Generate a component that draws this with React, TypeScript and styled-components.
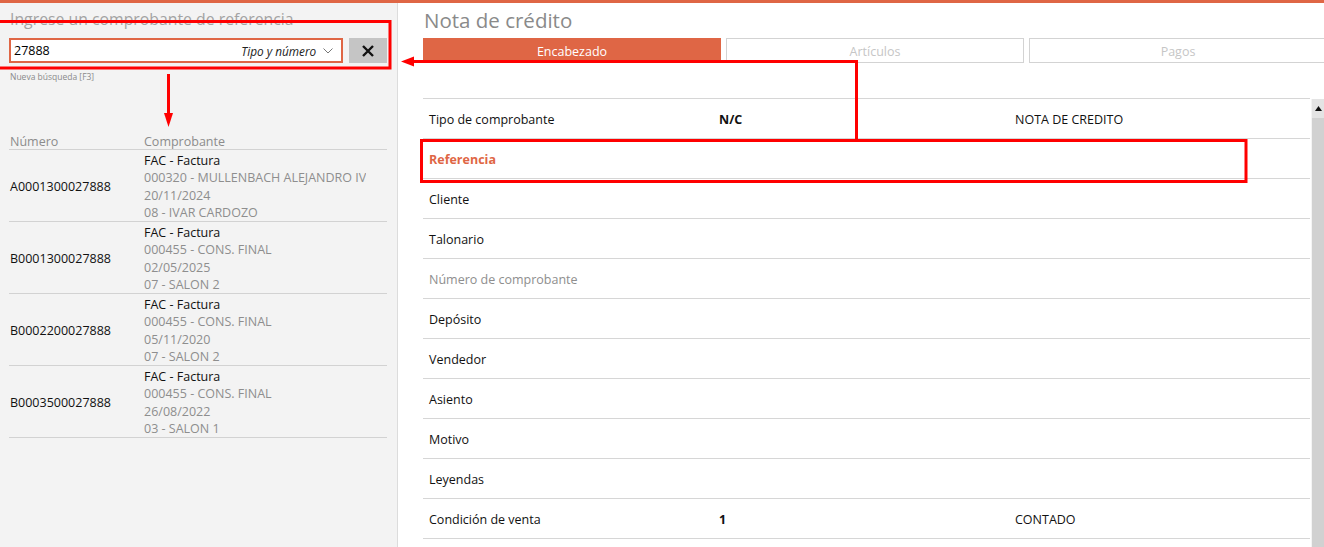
import styled, { createGlobalStyle } from "styled-components";

const GlobalStyle = createGlobalStyle`
    html, body {
        margin: 0;
        padding: 0;
        background: #ffffff;
    }
    body {
        font-family: "Open Sans", "Noto Sans", sans-serif;
        font-size: 12.5px;
        color: #111;
    }
    * { box-sizing: border-box; }
`

const ORANGE = "#df6645";

const Page = styled.div`
    position: relative;
    width: 1324px;
    height: 547px;
    overflow: hidden;
    border-top: 3px solid ${ORANGE};
    display: flex;
`

/* left side: reference search */
const LeftPanel = styled.div`
    width: 398px;
    flex-shrink: 0;
    background: #f3f3f3;
    border-right: 1px solid #dcdcdc;
    padding: 5px 10px 0 9px;
    display: flex;
    flex-direction: column;
`
const LeftTitle = styled.div`
    font-size: 15.8px;
    line-height: 22px;
    color: #a3a3a3;
    padding-left: 1px;
    white-space: nowrap;
`
const SearchRow = styled.div`
    display: flex;
    gap: 6px;
    margin-top: 8px;
    height: 25px;
`
const SearchBox = styled.div`
    width: 336px;
    height: 25px;
    background: #fff;
    border: 2px solid ${ORANGE};
    display: flex;
    align-items: center;
    padding: 0 8px 0 3px;
`
const SearchValue = styled.span`
    flex: 1;
    font-size: 12.5px;
    color: #000;
`
const SearchType = styled.span`
    font-style: italic;
    font-size: 11.8px;
    color: #222;
    margin-right: 7px;
`
const ClearButton = styled.button`
    width: 38px;
    height: 25px;
    border: none;
    padding: 0;
    background: #c5c5c5;
    display: flex;
    align-items: center;
    justify-content: center;
`
const Hint = styled.div`
    font-size: 8.5px;
    line-height: 10px;
    color: #8a8a8a;
    margin-top: 9px;
    padding-left: 1px;
`
const Table = styled.div`
    width: 378px;
    margin-top: 50px;
`
const HeadRow = styled.div`
    display: flex;
    height: 18px;
    border-bottom: 1px solid #d2d2d2;
    color: #8c8c8c;
    line-height: 16px;
    padding-top: 2px;
`
const NumCol = styled.div`
    width: 135px;
    flex-shrink: 0;
    padding-left: 1px;
`
const CompCol = styled.div`
    width: 222px;
    overflow: hidden;
    white-space: nowrap;
`
const ResultRow = styled.div`
    display: flex;
    align-items: center;
    height: 72px;
    padding-top: 2px;
    border-bottom: 1px solid #d2d2d2;
`
const RowNumber = styled(NumCol)`
    color: #111;
`
const Line = styled.div<{ $muted?: boolean }>`
    line-height: 17.2px;
    color: ${p => (p.$muted ? "#8e8e8e" : "#111")};
`

/* right side: credit note form */
const RightPanel = styled.div`
    flex: 1;
    padding: 4px 0 0 25px;
    display: flex;
    flex-direction: column;
    overflow: hidden;
`
const Title = styled.div`
    font-size: 20.5px;
    line-height: 26px;
    color: #8a8a8a;
    padding-left: 1px;
`
const Tabs = styled.div`
    display: grid;
    grid-template-columns: repeat(3, 298px);
    gap: 5px;
    margin-top: 5px;
`
const Tab = styled.div<{ $active?: boolean }>`
    height: 25px;
    line-height: 25px;
    text-align: center;
    font-size: 12.5px;
    border: 1px solid ${p => (p.$active ? ORANGE : "#d3d3d3")};
    background: ${p => (p.$active ? ORANGE : "#fff")};
    color: ${p => (p.$active ? "#fff" : "#c6c6c6")};
`
const FormArea = styled.div`
    display: flex;
    gap: 1px;
    margin-top: 35px;
    flex: 1;
`
const Form = styled.div`
    width: 887px;
    border-top: 1px solid #d6d6d6;
`
const FormRow = styled.div`
    display: grid;
    grid-template-columns: 296px 296px 1fr;
    align-items: center;
    height: 40px;
    padding-top: 2px;
    border-bottom: 1px solid #d6d6d6;
`
const Label = styled.div<{ $tone?: "accent" | "muted" }>`
    padding-left: 6px;
    color: ${p => (p.$tone === "accent" ? ORANGE : p.$tone === "muted" ? "#8e8e8e" : "#111")};
    font-weight: ${p => (p.$tone === "accent" ? 700 : 400)};
`
const Code = styled.div`
    font-weight: 700;
`
const Value = styled.div``

const Scrollbar = styled.div`
    width: 13px;
    margin-top: 1px;
    background: #d1d1d1;
    border-left: 1px solid #f4f4f4;
    display: flex;
    flex-direction: column;
`
const ScrollArrow = styled.div`
    height: 19px;
    background: #e4e4e4;
    display: flex;
    align-items: center;
    justify-content: center;
`

/* red annotations drawn over the screenshot */
const Overlay = styled.svg`
    position: absolute;
    left: 0;
    top: -3px;
    pointer-events: none;
`

const results = [
    { num: "A0001300027888", client: "000320 - MULLENBACH ALEJANDRO IVAN", date: "20/11/2024", seller: "08 - IVAR CARDOZO" },
    { num: "B0001300027888", client: "000455 - CONS. FINAL", date: "02/05/2025", seller: "07 - SALON 2" },
    { num: "B0002200027888", client: "000455 - CONS. FINAL", date: "05/11/2020", seller: "07 - SALON 2" },
    { num: "B0003500027888", client: "000455 - CONS. FINAL", date: "26/08/2022", seller: "03 - SALON 1" },
]

const fields: { label: string; tone?: "accent" | "muted"; code?: string; value?: string }[] = [
    { label: "Tipo de comprobante", code: "N/C", value: "NOTA DE CREDITO" },
    { label: "Referencia", tone: "accent" },
    { label: "Cliente" },
    { label: "Talonario" },
    { label: "Número de comprobante", tone: "muted" },
    { label: "Depósito" },
    { label: "Vendedor" },
    { label: "Asiento" },
    { label: "Motivo" },
    { label: "Leyendas" },
    { label: "Condición de venta", code: "1", value: "CONTADO" },
]

const App = () => {
    return (
        <>
            <GlobalStyle />
            <Page>
                <LeftPanel>
                    <LeftTitle>Ingrese un comprobante de referencia</LeftTitle>
                    <SearchRow>
                        <SearchBox>
                            <SearchValue>27888</SearchValue>
                            <SearchType>Tipo y número</SearchType>
                            <svg width="10" height="6" viewBox="0 0 10 6">
                                <path d="M0.5 0.5 L5 5 L9.5 0.5" fill="none" stroke="#777" strokeWidth="1" />
                            </svg>
                        </SearchBox>
                        <ClearButton>
                            <svg width="12" height="12" viewBox="0 0 12 12">
                                <path d="M1 1 L11 11 M11 1 L1 11" stroke="#111" strokeWidth="2.4" />
                            </svg>
                        </ClearButton>
                    </SearchRow>
                    <Hint>Nueva búsqueda [F3]</Hint>
                    <Table>
                        <HeadRow>
                            <NumCol>Número</NumCol>
                            <CompCol>Comprobante</CompCol>
                        </HeadRow>
                        {results.map(r => (
                            <ResultRow key={r.num}>
                                <RowNumber>{r.num}</RowNumber>
                                <CompCol>
                                    <Line>FAC - Factura</Line>
                                    <Line $muted>{r.client}</Line>
                                    <Line $muted>{r.date}</Line>
                                    <Line $muted>{r.seller}</Line>
                                </CompCol>
                            </ResultRow>
                        ))}
                    </Table>
                </LeftPanel>
                <RightPanel>
                    <Title>Nota de crédito</Title>
                    <Tabs>
                        <Tab $active>Encabezado</Tab>
                        <Tab>Artículos</Tab>
                        <Tab>Pagos</Tab>
                    </Tabs>
                    <FormArea>
                        <Form>
                            {fields.map(f => (
                                <FormRow key={f.label}>
                                    <Label $tone={f.tone}>{f.label}</Label>
                                    <Code>{f.code}</Code>
                                    <Value>{f.value}</Value>
                                </FormRow>
                            ))}
                        </Form>
                        <Scrollbar>
                            <ScrollArrow>
                                <svg width="7" height="5" viewBox="0 0 7 5">
                                    <path d="M3.5 0 L7 5 L0 5 Z" fill="#111" />
                                </svg>
                            </ScrollArrow>
                        </Scrollbar>
                    </FormArea>
                </RightPanel>
                <Overlay width="1324" height="550" viewBox="0 0 1324 550">
                    <rect x="-5" y="21.5" width="395" height="46.5" fill="none" stroke="#ff0000" strokeWidth="3" />
                    <path d="M168.5 74 L168.5 114" stroke="#ff0000" strokeWidth="3" />
                    <path d="M164 113 L173 113 L168.5 127 Z" fill="#ff0000" />
                    <path d="M856.5 140 L856.5 61.5 L410 61.5" fill="none" stroke="#ff0000" strokeWidth="3" />
                    <path d="M414 56.5 L414 66.5 L401 61.5 Z" fill="#ff0000" />
                    <rect x="421.5" y="140.5" width="824.5" height="41" fill="none" stroke="#ff0000" strokeWidth="3" />
                </Overlay>
            </Page>
        </>
    )
}

export default App;
